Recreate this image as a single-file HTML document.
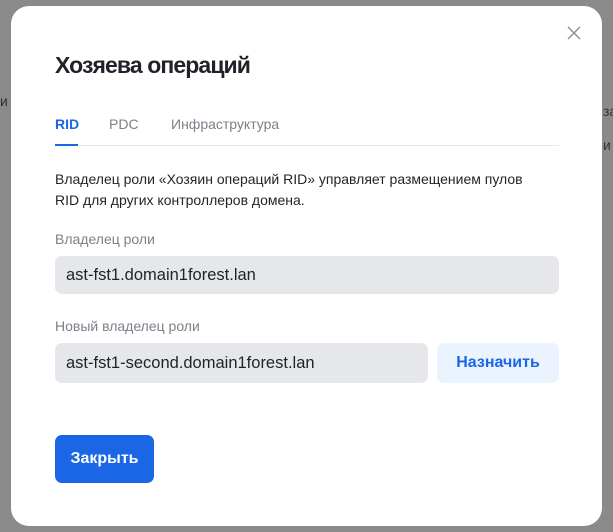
<!DOCTYPE html>
<html><head><meta charset="utf-8"><style>
*{margin:0;padding:0;box-sizing:border-box}
body{width:613px;height:532px;background:#8a8a8a;font-family:"Liberation Sans",sans-serif;position:relative;overflow:hidden;color:#1f2329}
.bg{position:absolute;color:#333;font-size:14px}
.m{position:absolute;left:11px;top:6px;width:591px;height:520px;background:#fff;border-radius:18px}
.a{position:absolute}
.x{left:567px;top:26px;width:14px;height:14px}
h1{position:absolute;left:55px;top:52px;font-size:23px;font-weight:bold;color:#1f2329;letter-spacing:-0.9px}
.tab{position:absolute;top:116px;font-size:14px;color:#7b8089}
.line{position:absolute;left:55px;top:145px;width:504px;height:1px;background:#e6e8eb}
.ul{position:absolute;left:55px;top:144px;width:23px;height:2px;background:#1a66e5}
.p{position:absolute;left:55px;top:169px;font-size:14px;line-height:21px;color:#1f2329;width:470px}
.lbl{position:absolute;left:55px;font-size:14px;color:#7b8089}
.in{position:absolute;left:55px;background:#e5e7ea;border-radius:7px;font-size:16.5px;color:#1f2329;padding-left:11px;display:flex;align-items:center}
.btn2{position:absolute;left:437px;top:343px;width:122px;height:40px;background:#ebf3fe;border-radius:7px;color:#1a66e5;font-size:16px;font-weight:bold;display:flex;align-items:center;justify-content:center}
.btn{position:absolute;left:55px;top:435px;width:99px;height:48px;background:#1a66e5;border-radius:7px;color:#fff;font-size:16px;font-weight:bold;display:flex;align-items:center;justify-content:center}
</style></head><body>
<div class="bg" style="left:0;top:93px">и</div>
<div class="bg" style="left:603px;top:103px">за</div>
<div class="bg" style="left:603px;top:137px">и</div>
<div class="m"></div>
<svg class="a x" viewBox="0 0 14 14"><path d="M1 1L13 13M13 1L1 13" stroke="#8a8f96" stroke-width="1.4"/></svg>
<h1>Хозяева операций</h1>
<div class="tab" style="left:55px;color:#1a66e5;font-weight:bold">RID</div>
<div class="tab" style="left:109px">PDC</div>
<div class="tab" style="left:171px">Инфраструктура</div>
<div class="line"></div><div class="ul"></div>
<div class="p">Владелец роли «Хозяин операций RID» управляет размещением пулов<br>RID для других контроллеров домена.</div>
<div class="lbl" style="top:231px">Владелец роли</div>
<div class="in" style="top:256px;width:504px;height:38px">ast-fst1.domain1forest.lan</div>
<div class="lbl" style="top:318px">Новый владелец роли</div>
<div class="in" style="top:343px;width:373px;height:40px">ast-fst1-second.domain1forest.lan</div>
<div class="btn2">Назначить</div>
<div class="btn">Закрыть</div>
</body></html>
